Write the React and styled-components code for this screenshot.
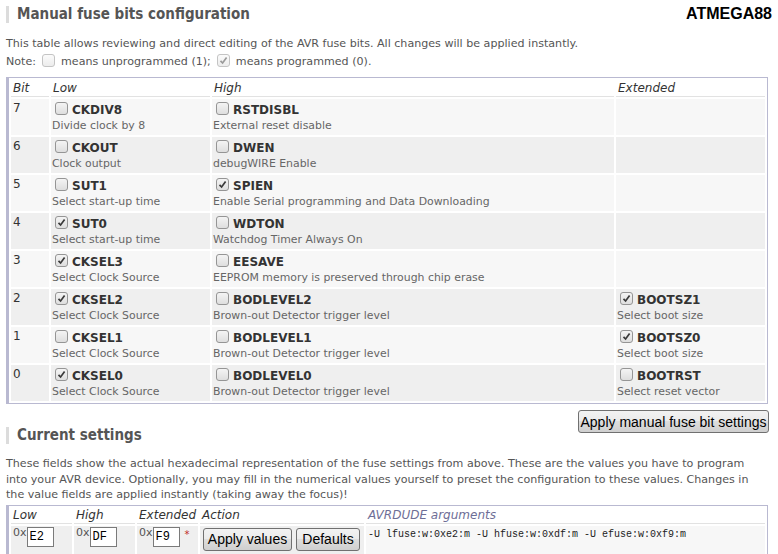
import React from "react";
import styled, { createGlobalStyle } from "styled-components";

const GlobalStyle = createGlobalStyle`
  body {
    margin: 0;
    background: #fff;
    font-family: "DejaVu Sans", Verdana, sans-serif;
    font-size: 11.1px;
    color: #555;
  }
`;

const Page = styled.div`
  width: 778px;
  box-sizing: border-box;
  padding: 5px 10px 0 6px;
`;

const TitleRow = styled.div`
  display: flex;
  justify-content: space-between;
  align-items: center;
`;

const SectionTitle = styled.h2`
  margin: ${(p) => p.$margin || "0"};
  border-left: 3px solid #dcdcdc;
  padding-left: 8px;
  font-family: "DejaVu Sans Condensed", "DejaVu Sans", sans-serif;
  font-weight: bold;
  font-size: 15px;
  line-height: 17px;
  color: #555;
`;

const Chip = styled.div`
  font-family: "Liberation Sans", Arial, sans-serif;
  font-weight: bold;
  font-size: 16px;
  color: #000;
  margin-right: -4px;
`;

const Text = styled.p`
  margin: ${(p) => p.$margin || "0"};
  line-height: ${(p) => p.$lh || "18px"};
  color: #555;
`;

const Box = styled.span`
  display: inline-block;
  vertical-align: ${(p) => (p.$inline ? "-2px" : "-1px")};
  width: 11px;
  height: 11px;
  border: 1px solid ${(p) => (p.$faded ? "#c4c4c4" : "#959595")};
  border-radius: 3px;
  background: ${(p) =>
    p.$faded
      ? "linear-gradient(#fbfbfb, #ececec)"
      : "linear-gradient(#f4f4f4, #dedede)"};
  margin: ${(p) => (p.$inline ? "0 6px" : "0 4px 0 3px")};
  position: relative;
  svg {
    position: absolute;
    left: 1px;
    top: 1px;
  }
`;

const Check = ({ on, faded, inline }) => (
  <Box $faded={faded} $inline={inline}>
    {on && (
      <svg width="9" height="9" viewBox="0 0 9 9">
        <path
          d="M1.5 4.8 L3.6 7 L7.6 1.6"
          fill="none"
          stroke={faded ? "#9a9a9a" : "#3a3a3a"}
          strokeWidth="1.7"
        />
      </svg>
    )}
  </Box>
);

const FuseTable = styled.table`
  width: 762px;
  border-collapse: separate;
  border-spacing: 2px;
  border: 1px solid #b9b9d1;
  border-left: 3px solid #b9b9d1;
  margin-top: 6px;
  table-layout: fixed;
`;

const Head = styled.th`
  text-align: left;
  font-weight: normal;
  font-style: italic;
  font-size: 12px;
  color: ${(p) => p.$tint || "#333"};
  padding: 0 2px 1px;
  height: ${(p) => p.$h || "15px"};
  border-bottom: 1px solid #e2e2e2;
  width: ${(p) => p.$w || "auto"};
  white-space: nowrap;
`;

const Cell = styled.td`
  vertical-align: top;
  background: ${(p) => (p.$alt ? "#efefef" : "#f7f7f7")};
  padding: 2px 1px 0;
  height: 34px;
`;

const BitNo = styled.div`
  font-size: 12px;
  color: #333;
  padding-left: 1px;
  line-height: 14px;
`;

const FuseName = styled.div`
  font-weight: bold;
  font-size: 12px;
  color: #333;
  line-height: 19px;
  white-space: nowrap;
`;

const FuseDesc = styled.div`
  color: #666;
  font-size: 10.9px;
  line-height: 12px;
  white-space: nowrap;
`;

const Footer = styled.div`
  display: flex;
  justify-content: space-between;
  align-items: flex-start;
  margin-top: 6px;
`;

const Button = styled.button`
  font-family: "Liberation Sans", Arial, sans-serif;
  font-size: 14px;
  color: #000;
  width: ${(p) => p.$w};
  height: ${(p) => p.$h || "23px"};
  padding: 0;
  border: 1px solid #707070;
  border-radius: 3px;
  background: linear-gradient(#f2f2f2 0%, #ebebeb 45%, #dddddd 50%, #cfcfcf 100%);
  cursor: pointer;
  margin: ${(p) => p.$margin || "0"};
  vertical-align: top;
`;

const ValueTable = styled(FuseTable)`
  margin-top: 2px;
`;

const ValueCell = styled.td`
  vertical-align: top;
  background: ${(p) => (p.$light ? "#f7f7f7" : "#efefef")};
  padding: 0 2px 4px;
  height: 27px;
  white-space: nowrap;
  color: #555;
  font-size: 11px;
`;

const HexInput = styled.input`
  width: 21px;
  height: 16px;
  border: 1px solid #7a7a7a;
  padding: 1px 2px;
  margin: 1px 0 0 0;
  font-family: "Liberation Mono", "DejaVu Sans Mono", monospace;
  font-size: 12px;
  color: #000;
  background: #fff;
  vertical-align: top;
`;

const Star = styled.span`
  color: #c02828;
  font-size: 10px;
  margin-left: 5px;
  vertical-align: top;
  position: relative;
  top: 3px;
`;

const Args = styled.div`
  font-family: "Liberation Mono", "DejaVu Sans Mono", monospace;
  font-size: 10px;
  color: #222;
  padding: 3px 0 0 0;
`;

const rows = [
  { bit: 7, low: ["CKDIV8", "Divide clock by 8", false], high: ["RSTDISBL", "External reset disable", false] },
  { bit: 6, low: ["CKOUT", "Clock output", false], high: ["DWEN", "debugWIRE Enable", false] },
  { bit: 5, low: ["SUT1", "Select start-up time", false], high: ["SPIEN", "Enable Serial programming and Data Downloading", true] },
  { bit: 4, low: ["SUT0", "Select start-up time", true], high: ["WDTON", "Watchdog Timer Always On", false] },
  { bit: 3, low: ["CKSEL3", "Select Clock Source", true], high: ["EESAVE", "EEPROM memory is preserved through chip erase", false] },
  { bit: 2, low: ["CKSEL2", "Select Clock Source", true], high: ["BODLEVEL2", "Brown-out Detector trigger level", false], ext: ["BOOTSZ1", "Select boot size", true] },
  { bit: 1, low: ["CKSEL1", "Select Clock Source", false], high: ["BODLEVEL1", "Brown-out Detector trigger level", false], ext: ["BOOTSZ0", "Select boot size", true] },
  { bit: 0, low: ["CKSEL0", "Select Clock Source", true], high: ["BODLEVEL0", "Brown-out Detector trigger level", false], ext: ["BOOTRST", "Select reset vector", false] },
];

const Fuse = ({ data }) =>
  data ? (
    <>
      <FuseName>
        <Check on={data[2]} />
        {data[0]}
      </FuseName>
      <FuseDesc>{data[1]}</FuseDesc>
    </>
  ) : null;

const App = () => {
  return (
    <Page>
      <GlobalStyle />
      <TitleRow>
        <SectionTitle>Manual fuse bits configuration</SectionTitle>
        <Chip>ATMEGA88</Chip>
      </TitleRow>
      <Text $margin="12px 0 0">
        This table allows reviewing and direct editing of the AVR fuse bits. All changes will be applied instantly.
      </Text>
      <Text>
        Note:
        <Check faded inline />
        means unprogrammed (1);
        <Check faded inline on />
        means programmed (0).
      </Text>

      <FuseTable>
        <thead>
          <tr>
            <Head $w="34px">Bit</Head>
            <Head $w="155px">Low</Head>
            <Head $w="398px">High</Head>
            <Head>Extended</Head>
          </tr>
        </thead>
        <tbody>
          {rows.map((r) => (
            <tr key={r.bit}>
              <Cell $alt={r.bit % 2 === 0}>
                <BitNo>{r.bit}</BitNo>
              </Cell>
              <Cell $alt={r.bit % 2 === 0}>
                <Fuse data={r.low} />
              </Cell>
              <Cell $alt={r.bit % 2 === 0}>
                <Fuse data={r.high} />
              </Cell>
              <Cell $alt={r.bit % 2 === 0}>
                <Fuse data={r.ext} />
              </Cell>
            </tr>
          ))}
        </tbody>
      </FuseTable>

      <Footer>
        <SectionTitle $margin="17px 0 0">Current settings</SectionTitle>
        <Button $w="191px" $margin="0 -1px 0 0">Apply manual fuse bit settings</Button>
      </Footer>

      <Text $margin="12px 0 0" $lh="15.5px">
        These fields show the actual hexadecimal representation of the fuse settings from above. These are the values you have to program into your AVR device. Optionally, you may fill in the numerical values yourself to preset the configuration to these values. Changes in the value fields are applied instantly (taking away the focus)!
      </Text>

      <ValueTable>
        <thead>
          <tr>
            <Head $w="57px" $h="12px">Low</Head>
            <Head $w="57px" $h="12px">High</Head>
            <Head $w="57px" $h="12px">Extended</Head>
            <Head $w="160px" $h="12px">Action</Head>
            <Head $h="12px" $tint="#6e6e96">AVRDUDE arguments</Head>
          </tr>
        </thead>
        <tbody>
          <tr>
            <ValueCell>
              0x<HexInput defaultValue="E2" />
            </ValueCell>
            <ValueCell>
              0x<HexInput defaultValue="DF" />
            </ValueCell>
            <ValueCell>
              0x<HexInput defaultValue="F9" />
              <Star>*</Star>
            </ValueCell>
            <ValueCell>
              <Button $w="89px" $h="23px" $margin="2px 4px 0 1px">Apply values</Button>
              <Button $w="64px" $h="23px" $margin="2px 0 0">Defaults</Button>
            </ValueCell>
            <ValueCell $light>
              <Args>-U lfuse:w:0xe2:m -U hfuse:w:0xdf:m -U efuse:w:0xf9:m</Args>
            </ValueCell>
          </tr>
        </tbody>
      </ValueTable>
    </Page>
  );
};

export default App;
